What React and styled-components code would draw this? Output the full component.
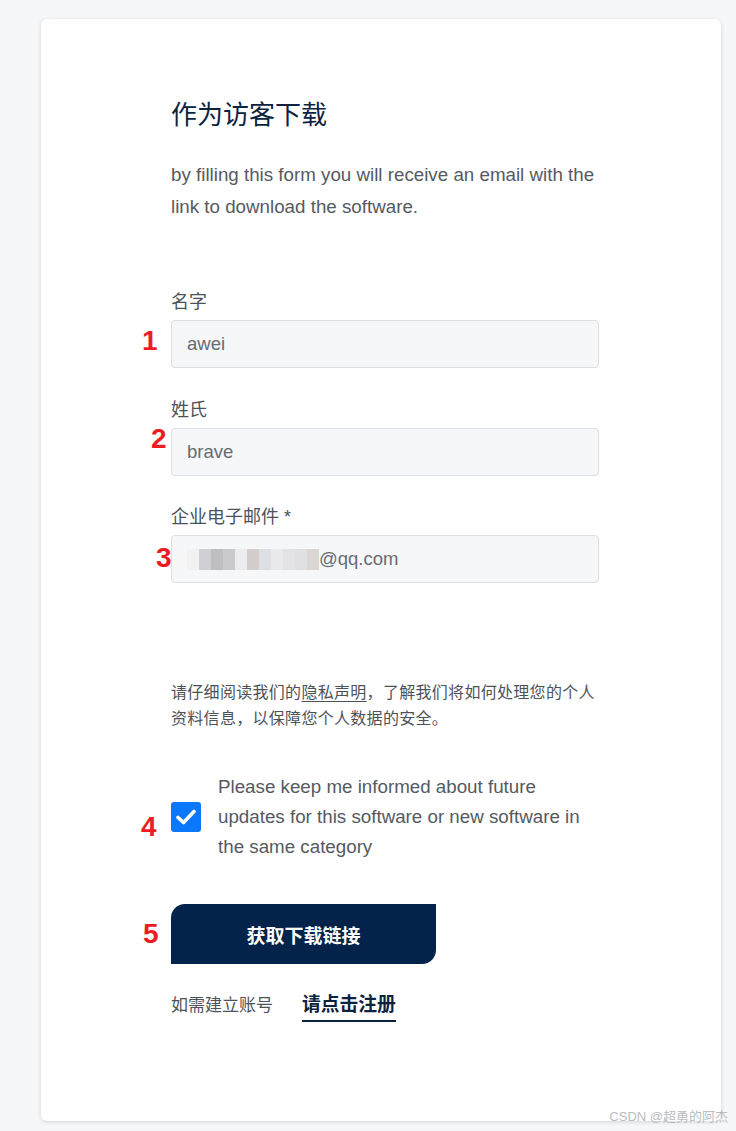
import React from "react";
import styled, { createGlobalStyle } from "styled-components";

const GlobalStyle = createGlobalStyle`
  html, body {
    margin: 0;
    padding: 0;
    background: #f6f7f9;
  }
  body {
    font-family: "Liberation Sans", Arial, "Noto Sans CJK SC", sans-serif;
  }
`;

const Page = styled.div`
  position: relative;
  width: 736px;
  height: 1131px;
  padding: 19px 0 0 41px;
  box-sizing: border-box;
`;

const Card = styled.div`
  width: 680px;
  height: 1102px;
  background: #fff;
  border-radius: 6px;
  box-shadow: 0 1px 4px rgba(0, 0, 0, 0.14);
  padding: 78px 0 0 130px;
  box-sizing: border-box;
`;

const Form = styled.div`
  width: 428px;
  display: flex;
  flex-direction: column;
`;

const Title = styled.h1`
  margin: 0;
  font-size: 26px;
  line-height: 36px;
  font-weight: 400;
  color: #0c2340;
`;

const Intro = styled.p`
  margin: 26px 0 0;
  font-size: 18.75px;
  line-height: 32px;
  color: #555a61;
`;

const Field = styled.div`
  position: relative;
  margin-top: ${(p) => p.$gap}px;
  display: flex;
  flex-direction: column;
  gap: 6px;
`;

const Label = styled.label`
  font-size: 18px;
  line-height: 24px;
  color: #4d5259;
`;

const Input = styled.div`
  height: 48px;
  box-sizing: border-box;
  border: 1px solid #dcdee3;
  border-radius: 4px;
  background: #f6f7f9;
  padding: 0 15px;
  display: flex;
  align-items: center;
  font-size: 18.5px;
  color: #666b72;
`;

const Mark = styled.span`
  position: absolute;
  left: ${(p) => p.$left}px;
  top: ${(p) => p.$top}px;
  font-family: "Liberation Sans", Arial, sans-serif;
  font-weight: 700;
  font-size: 28px;
  line-height: 30px;
  color: #ec1c24;
`;

const Privacy = styled.p`
  margin: 97px 0 0;
  font-size: 16px;
  line-height: 26px;
  letter-spacing: 0.3px;
  color: #4d5259;
`;

const Underlined = styled.span`
  text-decoration: underline;
  text-underline-offset: 3px;
`;

const CheckRow = styled.div`
  position: relative;
  margin-top: 40px;
  display: flex;
  align-items: center;
  gap: 17px;
`;

const Box = styled.span`
  flex: none;
  width: 30px;
  height: 30px;
  border-radius: 3px;
  background: #0b77fb;
  display: flex;
  align-items: center;
  justify-content: center;
`;

const CheckText = styled.span`
  font-size: 18.75px;
  line-height: 30px;
  color: #555a61;
`;

const Button = styled.button`
  position: relative;
  margin-top: 42px;
  width: 265px;
  height: 60px;
  border: none;
  border-radius: 14px 0 14px 0;
  background: #03234b;
  color: #fff;
  font-family: "Liberation Sans", "Noto Sans CJK SC", sans-serif;
  font-size: 19px;
  font-weight: 700;
  padding: 0;
`;

const Footer = styled.div`
  margin-top: 29px;
  display: flex;
  align-items: baseline;
  gap: 29px;
  line-height: 24px;
`;

const Plain = styled.span`
  font-size: 17px;
  color: #4d5259;
`;

const Link = styled.span`
  font-size: 18.8px;
  color: #0c2340;
  font-weight: 700;
  padding-bottom: 3px;
  border-bottom: 2px solid #0c2340;
`;

const Watermark = styled.span`
  position: absolute;
  right: 8px;
  bottom: 6px;
  font-size: 13px;
  color: #b9bcc1;
  font-family: "Liberation Sans", "Noto Sans CJK SC", sans-serif;
`;

const mosaic = [
  "#f2f2f2", "#e9e9ec", "#dcdce0", "#d3cdcb", "#e6e6e8", "#c9c9ce", "#d9d6d4", "#cfcfd4",
  "#e3e3e6", "#c4c3c6", "#dedfe2", "#d6d8de", "#ececee", "#cfd0d4", "#bfbfc3", "#e0e0e3",
];

const Mosaic = () => (
  <svg width="132" height="22" viewBox="0 0 132 22">
    {Array.from({ length: 33 }).map((_, i) => {
      const col = i % 11;
      const row = Math.floor(i / 11);
      return (
        <rect
          key={i}
          x={col * 12}
          y={row * 7 + 1}
          width="12"
          height="7"
          fill={mosaic[(i * 7 + row * 3) % mosaic.length]}
        />
      );
    })}
  </svg>
);

const Check = () => (
  <svg width="20" height="16" viewBox="0 0 20 16">
    <path d="M2 8.5 L7.5 13.5 L18 2.5" fill="none" stroke="#fff" strokeWidth="3.6" strokeLinecap="round" strokeLinejoin="round" />
  </svg>
);

export default function App() {
  return (
    <Page>
      <GlobalStyle />
      <Card>
        <Form>
          <Title>作为访客下载</Title>
          <Intro>
            by filling this form you will receive an email with the link to download the software.
          </Intro>

          <Field $gap={67}>
            <Label>名字</Label>
            <Input>awei</Input>
            <Mark $left={-29} $top={36}>1</Mark>
          </Field>
          <Field $gap={30}>
            <Label>姓氏</Label>
            <Input>brave</Input>
            <Mark $left={-20} $top={26}>2</Mark>
          </Field>
          <Field $gap={29}>
            <Label>企业电子邮件 *</Label>
            <Input>
              <Mosaic />
              @qq.com
            </Input>
            <Mark $left={-15} $top={38}>3</Mark>
          </Field>

          <Privacy>
            请仔细阅读我们的<Underlined>隐私声明</Underlined>，了解我们将如何处理您的个人资料信息，以保障您个人数据的安全。
          </Privacy>

          <CheckRow>
            <Box>
              <Check />
            </Box>
            <CheckText>
              Please keep me informed about future updates for this software or new software in the same category
            </CheckText>
            <Mark $left={-30} $top={40}>4</Mark>
          </CheckRow>

          <Button>
            获取下载链接
            <Mark $left={-28} $top={15}>5</Mark>
          </Button>

          <Footer>
            <Plain>如需建立账号</Plain>
            <Link>请点击注册</Link>
          </Footer>
        </Form>
      </Card>
      <Watermark>CSDN @超勇的阿杰</Watermark>
    </Page>
  );
}
